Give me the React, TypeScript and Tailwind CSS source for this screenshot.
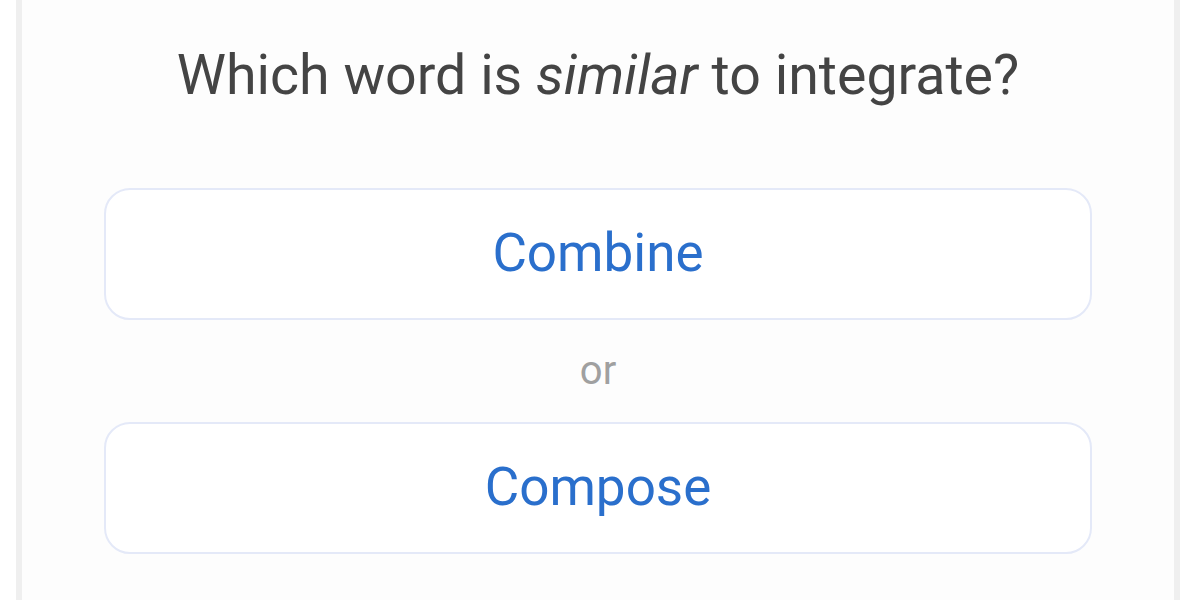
export default function App() {
  return (
    <div className="h-[600px] w-[1200px] overflow-hidden bg-white pl-[16px] pr-[20px] font-['Roboto',sans-serif]">
      <div className="h-[640px] border-l-[6px] border-r-[6px] border-[#efefef] bg-[#fdfdfd]">
        <div className="flex flex-col items-center pt-[44px]">
          <h1 className="text-[55.5px] leading-[64px] text-[#444444]">
            Which word is <em>similar</em> to integrate?
          </h1>
          <button className="mt-[80px] flex h-[132px] w-[988px] items-center justify-center rounded-[26px] border-2 border-[#e4e9f8] bg-white text-[53px] text-[#2a6fcc]">
            Combine
          </button>
          <div className="flex h-[102px] items-center text-[40px] text-[#a0a0a0]">or</div>
          <button className="flex h-[132px] w-[988px] items-center justify-center rounded-[26px] border-2 border-[#e4e9f8] bg-white text-[53px] text-[#2a6fcc]">
            Compose
          </button>
        </div>
      </div>
    </div>
  );
}
